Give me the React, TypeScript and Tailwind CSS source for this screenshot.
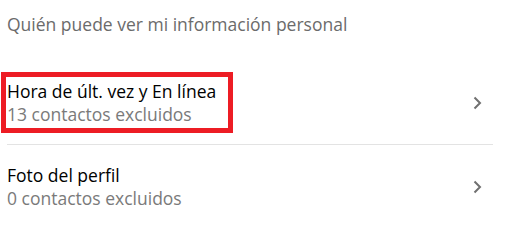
import React from "react";

interface Row {
  title: string;
  subtitle: string;
  highlighted?: boolean;
}

const rows: Row[] = [
  { title: "Hora de últ. vez y En línea", subtitle: "13 contactos excluidos", highlighted: true },
  { title: "Foto del perfil", subtitle: "0 contactos excluidos" },
];

const Chevron = () => (
  <svg width="10" height="14" viewBox="0 0 10 14" className="shrink-0">
    <path d="M2.5 1.5 L8 7 L2.5 12.5" fill="none" stroke="#707070" strokeWidth="2" />
  </svg>
);

export default function App() {
  return (
    <div
      className="w-[518px] h-[227px] bg-white overflow-hidden"
      style={{ fontFamily: '"Open Sans", "Noto Sans", sans-serif' }}
    >
      <div className="pl-[7px] pt-[11px] h-[61px] text-[17.5px] leading-[26px] text-[#6b6b6b]">
        Quién puede ver mi información personal
      </div>
      {rows.map((row, i) => (
        <div key={i} className="flex flex-col">
          <div className="flex items-center h-[83px] pr-[36px]">
            <div className="flex-1 relative pl-[7px]">
              {row.highlighted && (
                <div className="absolute left-[1px] top-[-8px] w-[232px] h-[61px] border-[5px] border-[#ed1c24]" />
              )}
              <div className="text-[17.5px] leading-[23px] text-black">{row.title}</div>
              <div className="text-[17.5px] leading-[23px] text-[#7a7a7a]">{row.subtitle}</div>
            </div>
            <Chevron />
          </div>
          {i === 0 && <div className="ml-[7px] w-[486px] h-px bg-[#e3e3e3]" />}
        </div>
      ))}
    </div>
  );
}
